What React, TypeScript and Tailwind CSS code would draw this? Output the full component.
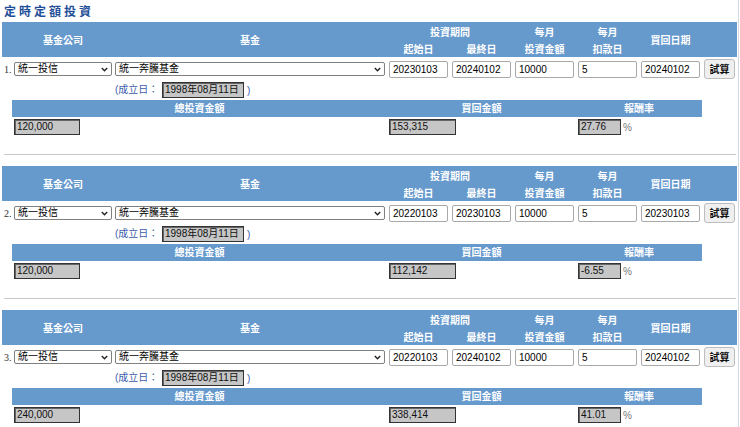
import React from "react";

type Sec = {
  n: number;
  start: string;
  end: string;
  amt: string;
  day: string;
  redeem: string;
  total: string;
  back: string;
  rate: string;
};

const data: Sec[] = [
  { n: 1, start: "20230103", end: "20240102", amt: "10000", day: "5", redeem: "20240102", total: "120,000", back: "153,315", rate: "27.76" },
  { n: 2, start: "20220103", end: "20230103", amt: "10000", day: "5", redeem: "20230103", total: "120,000", back: "112,142", rate: "-6.55" },
  { n: 3, start: "20220103", end: "20240102", amt: "10000", day: "5", redeem: "20240102", total: "240,000", back: "338,414", rate: "41.01" },
];

const Chevron = () => (
  <svg width="7" height="5" viewBox="0 0 7 5" className="shrink-0">
    <path d="M0.8 1 L3.5 3.8 L6.2 1" fill="none" stroke="#222" strokeWidth="1.4" />
  </svg>
);

const FakeSelect = ({ text }: { text: string }) => (
  <div className="flex items-center justify-between w-full h-[14px] border border-[#808080] rounded-[2px] bg-white pl-[3px] pr-[3px] text-[10px] leading-[12px] text-black">
    <span>{text}</span>
    <Chevron />
  </div>
);

const Input = ({ v }: { v: string }) => (
  <div className="w-full h-[17px] border border-[#a9a9a9] rounded-[2px] bg-white pl-[3px] text-[10px] leading-[15px] text-black">
    {v}
  </div>
);

const GrayBox = ({ v, w }: { v: string; w: string }) => (
  <div
    className={`${w} h-[16px] bg-[#c6c6c6] border border-[#333] shadow-[inset_1px_1px_0_#666] pl-[2px] text-[10px] leading-[14px] text-[#111]`}
  >
    {v}
  </div>
);

const Section = ({ s, last }: { s: Sec; last: boolean }) => (
  <div className="ml-[2px] w-[735px]">
    {/* header */}
    <div className="grid grid-cols-[11px_100px_274px_63px_63px_63px_63px_63px_35px] grid-rows-[17px_16px] h-[35px] pt-[2px] bg-[#6699cc] text-white font-bold text-[10px]">
      <div className="row-span-2" />
      <div className="row-span-2 flex items-center justify-center">基金公司</div>
      <div className="row-span-2 flex items-center justify-center">基金</div>
      <div className="col-span-2 flex items-center justify-center">投資期間</div>
      <div className="row-span-2 flex flex-col items-center justify-center leading-[17px]">
        <span>每月</span>
        <span>投資金額</span>
      </div>
      <div className="row-span-2 flex flex-col items-center justify-center leading-[17px]">
        <span>每月</span>
        <span>扣款日</span>
      </div>
      <div className="row-span-2 flex items-center justify-center">買回日期</div>
      <div className="row-span-2" />
      <div className="flex items-center justify-center">起始日</div>
      <div className="flex items-center justify-center">最終日</div>
    </div>
    {/* inputs row */}
    <div className="grid grid-cols-[11px_100px_274px_63px_63px_63px_63px_63px_35px] h-[24px] items-center">
      <div className="pl-[2px] text-[10px] text-[#333] font-['Liberation_Serif',serif]">{s.n}.</div>
      <div className="pl-[1px] pr-[1px]">
        <FakeSelect text="統一投信" />
      </div>
      <div className="px-[2px]">
        <FakeSelect text="統一奔騰基金" />
      </div>
      <div className="px-[2px]"><Input v={s.start} /></div>
      <div className="px-[2px]"><Input v={s.end} /></div>
      <div className="px-[2px]"><Input v={s.amt} /></div>
      <div className="px-[2px]"><Input v={s.day} /></div>
      <div className="px-[2px]"><Input v={s.redeem} /></div>
      <div className="px-[2px]">
        <div className="h-[20px] w-full border border-[#bdbdbd] rounded-[3px] bg-[#efefef] flex items-center justify-center text-[10px] font-semibold text-[#111]">
          試算
        </div>
      </div>
    </div>
    {/* founded row */}
    <div className="h-[19px] pl-[113px] pt-[1px] flex items-start text-[10px] text-[#3a5ca8]">
      <span className="w-[47px] leading-[16px]">(成立日：</span>
      <GrayBox v="1998年08月11日" w="w-[82px]" />
      <span className="ml-[3px] leading-[16px] pt-[1px]">)</span>
    </div>
    {/* sub header */}
    <div className="ml-[10px] w-[690px] h-[17px] grid grid-cols-[375px_189px_126px] bg-[#6699cc] text-white font-bold text-[10px] leading-[17px]">
      <div className="text-center">總投資金額</div>
      <div className="text-center">買回金額</div>
      <div className="text-center">報酬率</div>
    </div>
    {/* values row */}
    <div className="ml-[10px] w-[690px] h-[20px] pt-[2px] grid grid-cols-[375px_189px_126px]">
      <div className="pl-[2px]"><GrayBox v={s.total} w="w-[66px]" /></div>
      <div className="pl-[2px]"><GrayBox v={s.back} w="w-[67px]" /></div>
      <div className="pl-[2px] flex items-start">
        <GrayBox v={s.rate} w="w-[43px]" />
        <span className="ml-[2px] text-[10px] leading-[18px] text-[#777]">%</span>
      </div>
    </div>
    {!last && <div className="mt-[17px] mb-[11px] ml-[2px] w-[732px] h-px bg-[#c8c8c8]" />}
  </div>
);

export default function App() {
  return (
    <div className="w-[740px] h-[427px] overflow-hidden bg-white flex font-['Liberation_Sans','Noto_Sans_CJK_TC',sans-serif]">
      <div className="w-[738px] shrink-0">
        <div className="h-[22px] pl-[4px] pt-[2px] text-[12px] leading-[20px] font-bold tracking-[3px] text-[#1f4e98]">
          定時定額投資
        </div>
        {data.map((s, i) => (
          <Section key={s.n} s={s} last={i === data.length - 1} />
        ))}
      </div>
      <div className="w-px h-full bg-[#d3d8e2] shrink-0" />
    </div>
  );
}
